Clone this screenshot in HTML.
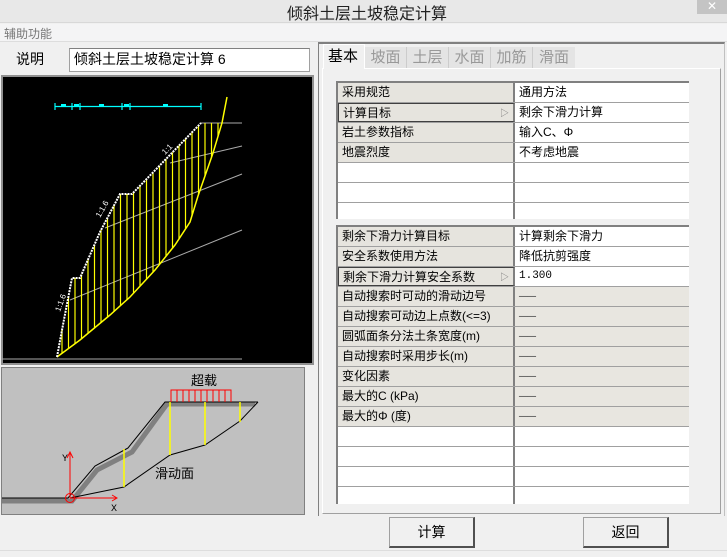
<!DOCTYPE html>
<html><head><meta charset="utf-8"><style>
*{box-sizing:border-box;margin:0;padding:0}
body{width:727px;height:557px;background:#f0f0f0;font-family:"Liberation Sans","Noto Sans CJK SC",sans-serif;font-size:12px;color:#000;position:relative;overflow:hidden}
.abs{position:absolute}
.title{left:0;top:0;width:727px;height:23px;background:#e8e8e8;border-bottom:1px solid #d8d8d8}
.title span{position:absolute;left:287px;top:0px;font-size:16px;color:#222}
.close{left:697px;top:0;width:30px;height:14px;background:#c4c4c4;color:#fff;text-align:center;font-size:12px;line-height:13px}
.menu{left:0;top:24px;width:727px;height:18px;background:#f4f4f5;border-bottom:1px solid #ddd}
.menu span{position:absolute;left:4px;top:1px;color:#777;font-size:12px}
.grid{position:absolute;left:336px;width:353px;border-top:2px solid #808080;border-left:2px solid #808080;background:#fff}
.row{height:20px;display:flex;border-bottom:1px solid #a0a0a0}
.row .l{width:177px;background:#e6e4de;border-right:2px solid #808080;padding-left:4px;line-height:19px;font-size:12px;position:relative}
.row .v{flex:1;padding-left:4px;line-height:19px;background:#fff}
.row .g{background:#e8e6e0;color:#555}
.row.e .l{background:#fff}
.sel .l{border:1px solid #404040;border-right:2px solid #808080}
.arr{position:absolute;right:4px;top:0;color:#777;font-size:9px}
.btn{position:absolute;top:517px;width:86px;height:31px;background:#f0f0f0;border:1px solid #a0a0a0;border-right:2px solid #505050;border-bottom:2px solid #505050;text-align:center;line-height:28px;font-size:14px}
</style></head><body>
<div class="abs title"><span>倾斜土层土坡稳定计算</span></div>
<div class="abs close">✕</div>
<div class="abs menu"><span>辅助功能</span></div>
<div class="abs" style="left:16px;top:49px;font-size:14px">说明</div>
<div class="abs" style="left:69px;top:48px;width:241px;height:24px;border:1px solid #a0a0a0;border-top-color:#808080;background:#fff;font-size:14px;padding-left:4px;line-height:21px">倾斜土层土坡稳定计算 6</div>

<div class="abs" style="left:1px;top:75px;width:313px;height:290px;border:2px solid #909090;background:#000"></div>
<svg class="abs" style="left:0;top:0" width="320" height="370" id="cv">
<g stroke="#0ff" stroke-width="1.2"><line x1="55" y1="106.5" x2="201" y2="106.5"/>
<line x1="55" y1="103" x2="55" y2="110"/><line x1="72" y1="103" x2="72" y2="110"/><line x1="80" y1="103" x2="80" y2="110"/><line x1="122" y1="103" x2="122" y2="110"/><line x1="130" y1="103" x2="130" y2="110"/><line x1="201" y1="103" x2="201" y2="110"/></g>
<g fill="#0ff"><rect x="61" y="104" width="5" height="2"/><rect x="74" y="104" width="5" height="2"/><rect x="99" y="104" width="5" height="2"/><rect x="124" y="104" width="5" height="2"/><rect x="163" y="104" width="5" height="2"/></g>
<g stroke="#aaa" stroke-width="1"><line x1="201" y1="123" x2="242" y2="123"/><line x1="170" y1="163" x2="242" y2="146"/><line x1="105" y1="228" x2="242" y2="174"/><line x1="70" y1="300" x2="242" y2="230"/><line x1="2" y1="359" x2="242" y2="359"/></g>
<g id="h" stroke="#ff0" stroke-width="1.2"></g>
<polyline fill="none" stroke="#ff0" stroke-width="1.5" points="57,357 80,340 110,315 130,297 155,270 175,245 190,222 198,196 213,153 222,123 227,97"/>
<polyline fill="none" stroke="#fff" stroke-width="2" stroke-dasharray="2 1" points="57,357 62,330 72,278 80,278 100,232 120,194 132,194 201,123"/>
<g fill="#fff" font-size="8"><text x="100" y="218" transform="rotate(-60 100 218)">1:1.6</text><text x="60" y="312" transform="rotate(-70 60 312)">1:1.6</text><text x="165" y="155" transform="rotate(-45 165 155)">1:1</text></g>
</svg>
<script>
(function(){var T=[[57,357],[62,330],[72,278],[80,278],[100,232],[120,194],[132,194],[201,123],[260,123]],
B=[[57,357],[80,340],[110,315],[130,297],[155,270],[175,245],[190,222],[198,196],[213,153],[222,123],[227,97]];
function f(P,x){for(var i=0;i<P.length-1;i++){if(x>=P[i][0]&&x<=P[i+1][0]){var t=(x-P[i][0])/(P[i+1][0]-P[i][0]);return P[i][1]+t*(P[i+1][1]-P[i][1]);}}return null;}
var g=document.getElementById('h'),s='';for(var x=62;x<=219;x+=6.5){var a=f(T,x),b=f(B,x);if(a!=null&&b!=null&&b>a)s+='<line x1="'+x+'" y1="'+a+'" x2="'+x+'" y2="'+b+'"/>';}g.innerHTML=s;})();
</script>

<div class="abs" style="left:1px;top:367px;width:304px;height:148px;border:1px solid #808080;background:#c0c0c0"></div>
<svg class="abs" style="left:0;top:360px" width="320" height="160">
<polyline fill="none" stroke="#808080" stroke-width="5" points="2,141 72,141 97,110 132,92 167,44 255,44"/>
<polyline fill="none" stroke="#000" stroke-width="1" points="2,138 68,138 95,106 128,88 165,42 258,42"/>
<polyline fill="none" stroke="#000" stroke-width="1" points="70,138 124,127 170,95 205,85 240,61 258,42"/>
<g stroke="#ff0" stroke-width="1.5"><line x1="124" y1="89" x2="124" y2="127"/><line x1="170" y1="42" x2="170" y2="95"/><line x1="205" y1="42" x2="205" y2="85"/><line x1="240" y1="42" x2="240" y2="62"/></g>
<g stroke="#f00" stroke-width="1"><polyline fill="none" points="171,42 171,30 231,30 231,42"/>
<line x1="177" y1="30" x2="177" y2="42"/><line x1="183" y1="30" x2="183" y2="42"/><line x1="189" y1="30" x2="189" y2="42"/><line x1="195" y1="30" x2="195" y2="42"/><line x1="201" y1="30" x2="201" y2="42"/><line x1="207" y1="30" x2="207" y2="42"/><line x1="213" y1="30" x2="213" y2="42"/><line x1="219" y1="30" x2="219" y2="42"/><line x1="225" y1="30" x2="225" y2="42"/>
<line x1="70" y1="138" x2="70" y2="93"/><line x1="70" y1="138" x2="117" y2="138"/><circle cx="70" cy="138" r="4.5" fill="none"/>
<polyline fill="none" points="67,98 70,92 73,98"/><polyline fill="none" points="112,135 117,138 112,141"/></g>
<text x="191" y="25" font-size="13">超载</text>
<text x="155" y="118" font-size="13">滑动面</text>
<text x="62" y="101" font-size="10" font-family="Liberation Mono">Y</text>
<text x="111" y="151" font-size="10" font-family="Liberation Mono">X</text>
</svg>

<div class="abs" style="left:318px;top:42px;width:407px;height:474px;border-top:2px solid #808080;border-left:1px solid #808080;border-right:1px solid #c0c0c0"></div>
<div class="abs" style="left:322px;top:68px;width:399px;height:446px;border:1px solid #fff;border-right-color:#a0a0a0;border-bottom-color:#a0a0a0"></div>
<div class="abs" style="left:323px;top:44px;width:42px;height:25px;background:#f0f0f0;border:1px solid #fff;border-bottom:none;font-size:15px;padding-left:4px;line-height:23px">基本</div>
<div class="abs" style="left:365px;top:47px;width:210px;height:21px;background:#e4e4e4;color:#999;font-size:15px;line-height:21px;display:flex">
<span style="width:42px;text-align:center;border-right:1px solid #ccc">坡面</span><span style="width:42px;text-align:center;border-right:1px solid #ccc">土层</span><span style="width:42px;text-align:center;border-right:1px solid #ccc">水面</span><span style="width:42px;text-align:center;border-right:1px solid #ccc">加筋</span><span style="width:42px;text-align:center">滑面</span></div>

<div class="grid" style="top:81px">
<div class="row"><div class="l">采用规范</div><div class="v">通用方法</div></div>
<div class="row sel"><div class="l">计算目标<span class="arr">▷</span></div><div class="v">剩余下滑力计算</div></div>
<div class="row"><div class="l">岩土参数指标</div><div class="v">输入C、Φ</div></div>
<div class="row"><div class="l">地震烈度</div><div class="v">不考虑地震</div></div>
<div class="row e"><div class="l"></div><div class="v"></div></div>
<div class="row e"><div class="l"></div><div class="v"></div></div>
<div class="row e" style="height:16px;border-bottom:none"><div class="l"></div><div class="v"></div></div>
</div>
<div class="grid" style="top:225px">
<div class="row"><div class="l">剩余下滑力计算目标</div><div class="v">计算剩余下滑力</div></div>
<div class="row"><div class="l">安全系数使用方法</div><div class="v">降低抗剪强度</div></div>
<div class="row sel"><div class="l">剩余下滑力计算安全系数<span class="arr">▷</span></div><div class="v" style="font-family:'Liberation Mono';font-size:11px">1.300</div></div>
<div class="row"><div class="l">自动搜索时可动的滑动边号</div><div class="v g">──</div></div>
<div class="row"><div class="l">自动搜索可动边上点数(&lt;=3)</div><div class="v g">──</div></div>
<div class="row"><div class="l">圆弧面条分法土条宽度(m)</div><div class="v g">──</div></div>
<div class="row"><div class="l">自动搜索时采用步长(m)</div><div class="v g">──</div></div>
<div class="row"><div class="l">变化因素</div><div class="v g">──</div></div>
<div class="row"><div class="l">最大的C (kPa)</div><div class="v g">──</div></div>
<div class="row"><div class="l">最大的Φ (度)</div><div class="v g">──</div></div>
<div class="row e"><div class="l"></div><div class="v"></div></div>
<div class="row e"><div class="l"></div><div class="v"></div></div>
<div class="row e"><div class="l"></div><div class="v"></div></div>
<div class="row e" style="height:17px;border-bottom:none"><div class="l"></div><div class="v"></div></div>
</div>

<div class="btn" style="left:389px">计算</div>
<div class="btn" style="left:583px">返回</div>
<div class="abs" style="left:0;top:550px;width:727px;height:1px;background:#ddd"></div>
</body></html>
